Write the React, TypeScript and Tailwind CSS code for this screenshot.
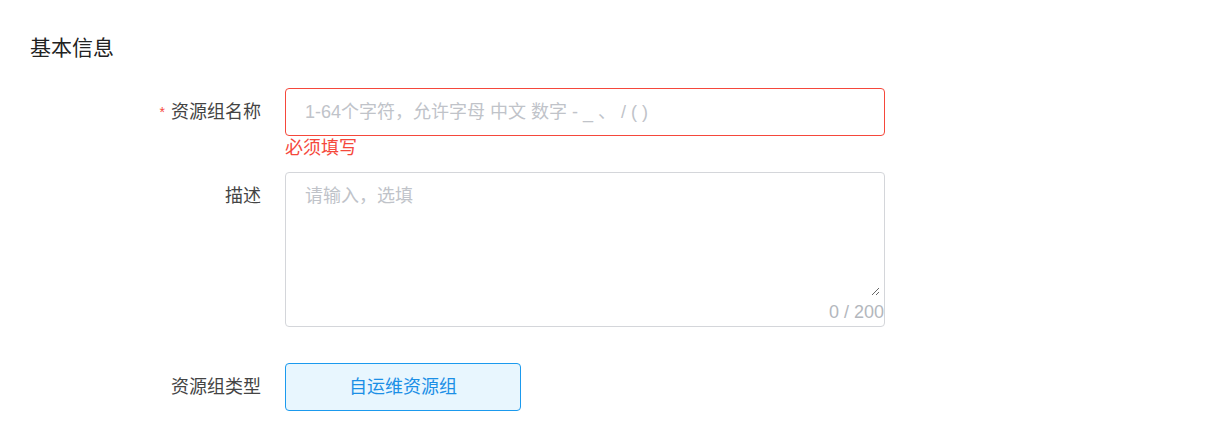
import React from "react";

export default function App() {
  const font = { fontFamily: '"Liberation Sans", "Noto Sans CJK SC", sans-serif' };
  return (
    <div className="min-h-[438px] w-[1215px] bg-white px-[30px] pt-[36px]" style={font}>
      <div className="text-[21px] leading-[24px] text-[#222]">基本信息</div>
      <div className="mt-[28px] flex flex-col">
        {/* Row 1 */}
        <div className="flex">
          <div className="flex h-[48px] w-[231px] items-center justify-end text-[18px] text-[#444]">
            <span className="mr-[6px] text-[14px] text-[#f5483b]">*</span>
            资源组名称
          </div>
          <div className="ml-[24px] flex flex-col">
            <input
              className="h-[48px] w-[600px] rounded-[4px] border border-[#f5483b] px-[19px] text-[18px] text-[#333] outline-none placeholder:text-[#c0c3c9]"
              placeholder="1-64个字符，允许字母 中文 数字 - _ 、 / ( )"
            />
            <div className="h-[24px] text-[18px] leading-[24px] text-[#f5483b]">必须填写</div>
          </div>
        </div>
        {/* Row 2 */}
        <div className="mt-[12px] flex">
          <div className="flex h-[48px] w-[231px] items-center justify-end text-[18px] text-[#444]">描述</div>
          <div className="relative ml-[24px] flex h-[155px] w-[600px] flex-col rounded-[4px] border border-[#d4d6da]">
            <textarea
              className="h-[123px] w-[594px] resize-y rounded-[4px] px-[19px] pt-[11px] text-[18px] leading-[24px] text-[#333] outline-none placeholder:text-[#c0c3c9]"
              placeholder="请输入，选填"
            />
            <div className="absolute bottom-[2px] right-0 text-[18px] leading-[24px] text-[#b3b7bd]">0 / 200</div>
          </div>
        </div>
        {/* Row 3 */}
        <div className="mt-[36px] flex">
          <div className="flex h-[48px] w-[231px] items-center justify-end text-[18px] text-[#444]">资源组类型</div>
          <button className="ml-[24px] flex h-[48px] w-[236px] items-center justify-center rounded-[4px] border border-[#1b9aee] bg-[#e8f6fe] text-[18px] text-[#1b8fe6]">
            自运维资源组
          </button>
        </div>
      </div>
    </div>
  );
}
